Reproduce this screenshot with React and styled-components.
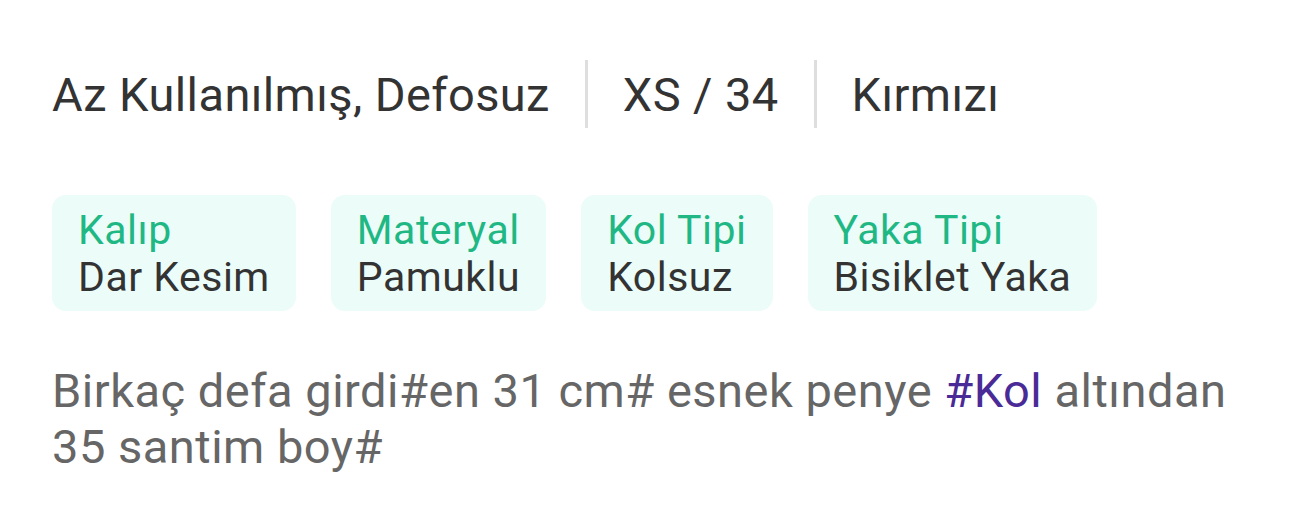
import React from 'react'
import styled, { createGlobalStyle } from 'styled-components'

const Global = createGlobalStyle`
  html, body { margin: 0; padding: 0; background: #fff; }
  body { font-family: Roboto, "Liberation Sans", sans-serif; -webkit-font-smoothing: antialiased; }
`

const Page = styled.div`
  padding: 60px 52px 0 52px;
`

const Summary = styled.div`
  display: flex;
  align-items: center;
  height: 68px;
  color: #333;
  font-size: 47px;
  letter-spacing: 0.4px;
`

const SummaryItem = styled.span`
  padding: 0 35px;
  &:first-child { padding-left: 0; }
`

const Divider = styled.span`
  width: 3px;
  align-self: stretch;
  background: #dedede;
`

const Chips = styled.div`
  display: flex;
  gap: 35px;
  margin-top: 67px;
`

const Chip = styled.div`
  background: #ecfcf8;
  border-radius: 14px;
  padding: 12px 26px 10px 26px;
  display: flex;
  flex-direction: column;
  font-size: 41px;
  line-height: 47px;
  letter-spacing: 0.5px;
`

const ChipLabel = styled.span`
  color: #1fb884;
`

const ChipValue = styled.span`
  color: #333;
`

const Description = styled.p`
  margin: 52px 0 0 0;
  font-size: 47px;
  line-height: 56px;
  letter-spacing: 0.5px;
  color: #666;
  max-width: 1190px;
`

const Tag = styled.span`
  color: #4a2a96;
`

const details = [
  { label: 'Kalıp', value: 'Dar Kesim' },
  { label: 'Materyal', value: 'Pamuklu' },
  { label: 'Kol Tipi', value: 'Kolsuz' },
  { label: 'Yaka Tipi', value: 'Bisiklet Yaka' },
]

export default function App() {
  return (
    <Page>
      <Global />
      <Summary>
        <SummaryItem>Az Kullanılmış, Defosuz</SummaryItem>
        <Divider />
        <SummaryItem>XS / 34</SummaryItem>
        <Divider />
        <SummaryItem>Kırmızı</SummaryItem>
      </Summary>

      <Chips>
        {details.map((d) => (
          <Chip key={d.label}>
            <ChipLabel>{d.label}</ChipLabel>
            <ChipValue>{d.value}</ChipValue>
          </Chip>
        ))}
      </Chips>

      <Description>
        Birkaç defa girdi#en 31 cm# esnek penye <Tag>#Kol</Tag> altından 35 santim boy#
      </Description>
    </Page>
  )
}
